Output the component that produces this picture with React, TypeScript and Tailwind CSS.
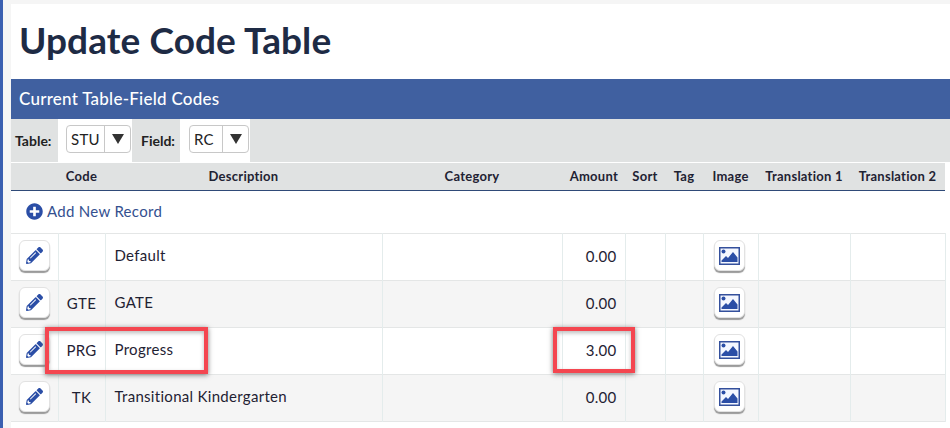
import { FaPencilAlt, FaPlusCircle } from 'react-icons/fa'

const columns = [
  { label: '', width: 'w-[47px]' },
  { label: 'Code', width: 'w-[47px]' },
  { label: 'Description', width: 'w-[277px]' },
  { label: 'Category', width: 'w-[180px]' },
  { label: 'Amount', width: 'w-[63px]', right: true },
  { label: 'Sort', width: 'w-[40px]' },
  { label: 'Tag', width: 'w-[38px]' },
  { label: 'Image', width: 'w-[55px]' },
  { label: 'Translation 1', width: 'w-[92px]' },
  { label: 'Translation 2', width: 'w-[95px]' },
]

const records = [
  { code: '', description: 'Default', amount: '0.00' },
  { code: 'GTE', description: 'GATE', amount: '0.00' },
  { code: 'PRG', description: 'Progress', amount: '3.00' },
  { code: 'TK', description: 'Transitional Kindergarten', amount: '0.00' },
]

const IconButton = ({ children }: { children: React.ReactNode }) => (
  <div className="mx-auto mb-[2px] flex h-[31px] w-[31px] items-center justify-center rounded-[6px] border border-[#e2e2e2] bg-white shadow-[0_2px_1px_#9a9a9a]">
    {children}
  </div>
)

const ImageIcon = () => (
  <svg width="21" height="18" viewBox="0 0 21 18">
    <rect x="0.75" y="0.75" width="19.5" height="16.5" fill="#f4f7ff" stroke="#34509c" strokeWidth="1.5" />
    <circle cx="4.5" cy="4.5" r="2" fill="#2b4ea6" />
    <path d="M2.5 15v-1.5L7 9l2 2 5-6 4.5 5.5V15z" fill="#2b4ea6" />
  </svg>
)

const Select = ({ value, width }: { value: string; width: string }) => (
  <div className={`flex h-[28px] items-stretch rounded-[4px] border border-[#c8c8c8] bg-white ${width}`}>
    <span className="flex-1 pl-1 text-[15px] leading-[26px] font-normal tracking-[0.3px] text-[#222]">{value}</span>
    <span className="flex w-[26px] items-center justify-center border-l border-[#c8c8c8]">
      <svg width="12" height="10" viewBox="0 0 12 10"><path d="M0 0h12L6 10z" fill="#333" /></svg>
    </span>
  </div>
)

const App = () => {
  return (
    <div className="flex h-[428px] w-[950px] overflow-hidden bg-[#f5f5f5] font-['Lato','Open_Sans',sans-serif]">
      <div className="w-[3px] shrink-0 bg-[#3a5fb0]" />
      <div className="relative ml-[8px] mt-[4px] min-w-0 flex-1 bg-white">
        <h1 className="ml-[8px] h-[75px] pt-[12px] text-[37px] leading-[48px] font-bold tracking-[0.1px] text-[#1e2b45]">Update Code Table</h1>

        <div className="flex h-[40px] items-center bg-[#4060a0] pl-[8px] text-[17px] font-medium tracking-[0.25px] text-white">
          Current Table-Field Codes
        </div>

        <div className="flex h-[43px] bg-[#e0e2e2] text-[14px] font-bold text-[#222]">
          <span className="flex w-[47px] items-center pl-[4px]">Table:</span>
          <div className="flex w-[74px] items-center justify-end bg-white pr-[1px] pb-[4px]"><Select value="STU" width="w-[65px]" /></div>
          <span className="flex w-[48px] items-center justify-center pl-[4px]">Field:</span>
          <div className="flex w-[70px] items-center justify-end bg-white pr-[1px] pb-[4px]"><Select value="RC" width="w-[60px]" /></div>
        </div>

        <table className="mt-[1px] table-fixed border-collapse text-[15px] tracking-[0.3px] text-[#1f2233]">
          <thead>
            <tr className="h-[27px] border-b-[1.5px] border-[#2f4a78] bg-[#e0e2e2] text-[13px] tracking-[0.25px]">
              {columns.map((column) => (
                <th key={column.label} className={`${column.width} p-0 font-bold ${column.right ? 'pr-[7px] text-right' : 'text-center'}`}>
                  {column.label}
                </th>
              ))}
            </tr>
          </thead>
          <tbody>
            <tr className="h-[43px] border-b border-[#e4e6e6]">
              <td colSpan={10} className="pl-[15px] text-[#34508f]">
                <span className="flex items-center gap-[4px]">
                  <FaPlusCircle className="text-[17px] text-[#2b4ea6]" />
                  Add New Record
                </span>
              </td>
            </tr>
            {records.map((record, i) => (
              <tr key={record.description} className={`h-[47px] border-b border-[#e4e6e6] ${i % 2 ? 'bg-[#f5f5f5]' : 'bg-white'}`}>
                <td className="border-r border-[#e4ecec]">
                  <IconButton><FaPencilAlt className="text-[17px] text-[#2b4ea6]" /></IconButton>
                </td>
                <td className="border-r border-[#e4ecec] text-center">{record.code}</td>
                <td className="border-r border-[#e4ecec] pb-[2px] pl-[9px]">{record.description}</td>
                <td className="border-r border-[#e4ecec]" />
                <td className="border-r border-[#e4ecec] pr-[8px] text-right">{record.amount}</td>
                <td className="border-r border-[#e4ecec]" />
                <td className="border-r border-[#e4ecec]" />
                <td className="border-r border-[#e4ecec] pr-[2px]">
                  <IconButton><ImageIcon /></IconButton>
                </td>
                <td className="border-r border-[#e4ecec]" />
                <td className="border-r border-[#e4ecec]" />
              </tr>
            ))}
          </tbody>
        </table>

        <div className="absolute left-[34px] top-[323px] h-[47px] w-[163px] border-[4px] border-[#f44650] shadow-[0_1px_5px_#777,inset_0_2px_4px_#bbb]" />
        <div className="absolute left-[542px] top-[323px] h-[46px] w-[82px] border-[4px] border-[#f44650] shadow-[0_1px_5px_#777,inset_0_2px_4px_#bbb]" />
      </div>
    </div>
  )
}

export default App
